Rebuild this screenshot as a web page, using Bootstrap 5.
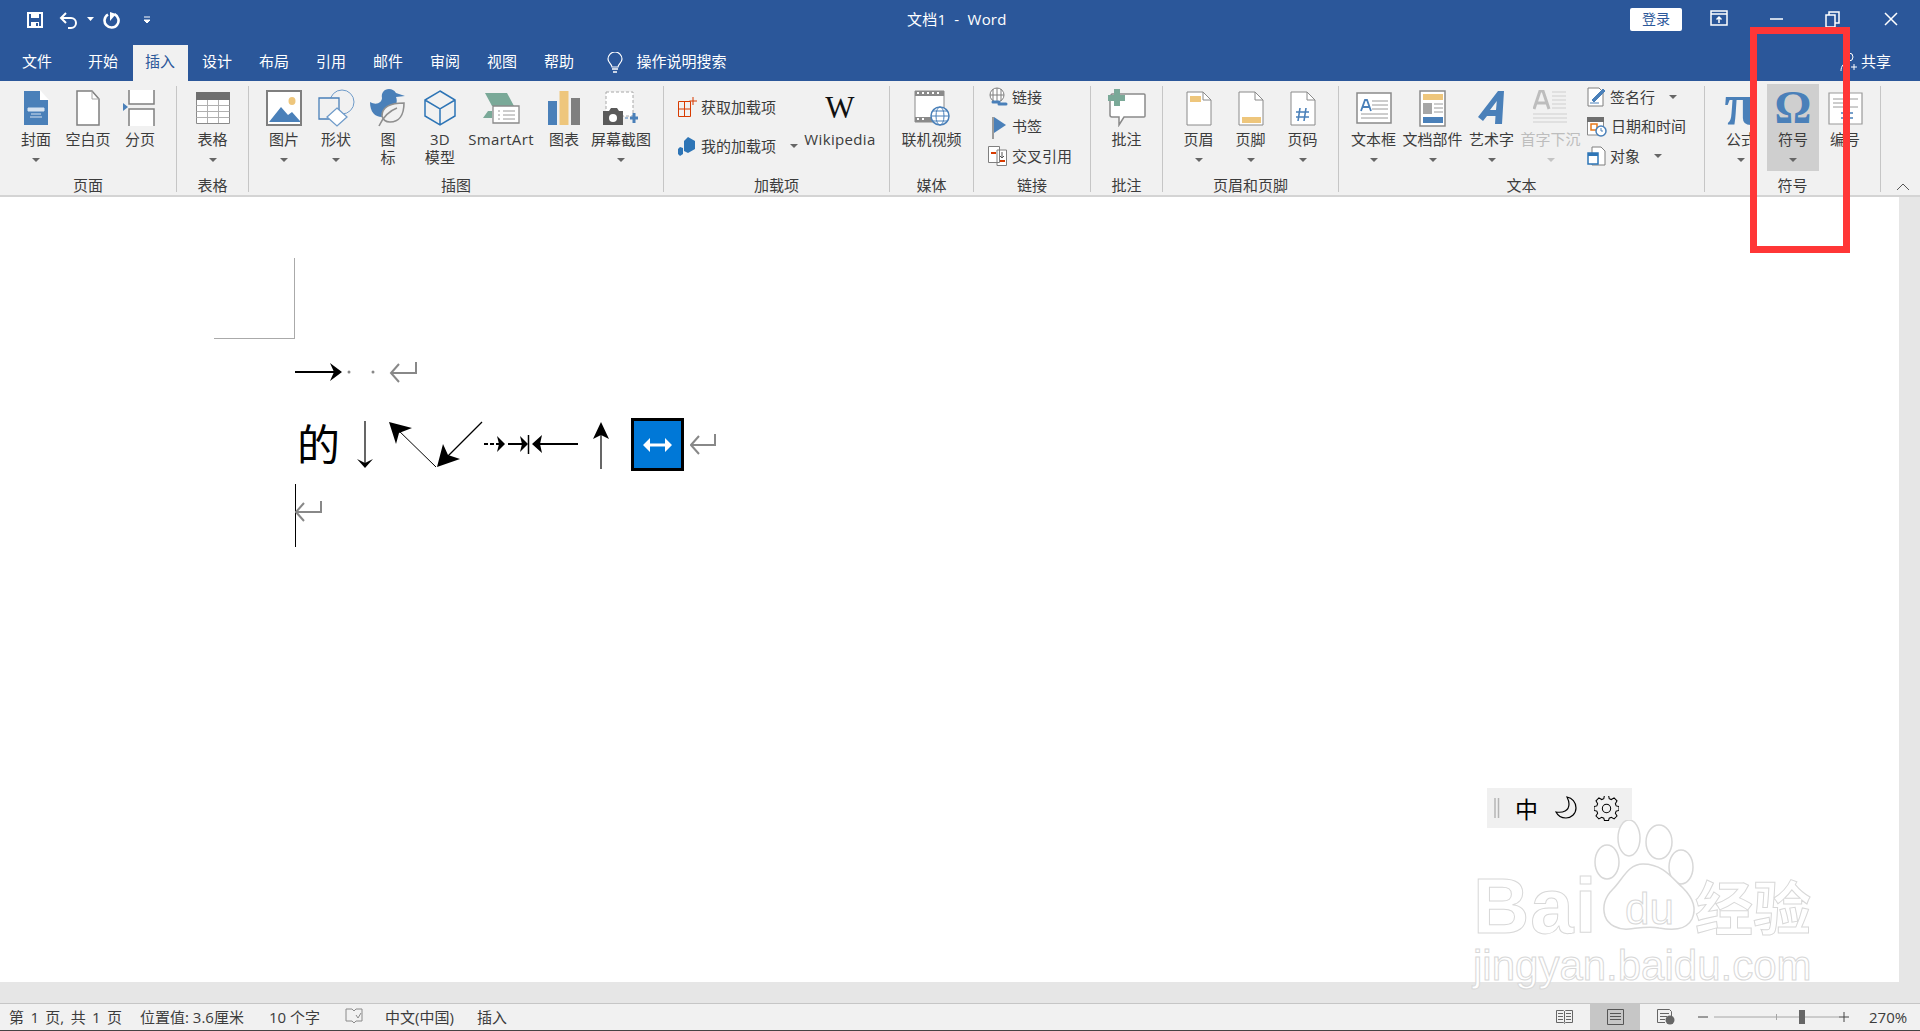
<!DOCTYPE html>
<html lang="zh-CN">
<head>
<meta charset="UTF-8">
<title>文档1 - Word</title>
<link href="https://cdn.jsdelivr.net/npm/bootstrap@5.3.3/dist/css/bootstrap.min.css" rel="stylesheet">
<style>
html, body { height: 100%; overflow: hidden; }
body { font-family: "Open Sans", "Noto Sans CJK SC", sans-serif; font-size: 15px; color: #3c3c3c; background: #fff; position: relative; }
svg { display: block; }
.app { height: 1031px; }
.titlebar { height: 45px; background: #2b579a; color: #fff; position: relative; }
.qat { padding-left: 27px; margin-bottom: 6px; }
.qat-more { margin-left: 23px; }
.doc-title { position: absolute; left: 907px; top: 8px; line-height: 22px; white-space: nowrap; letter-spacing: .2px; }
.signin { position: absolute; left: 1630px; top: 8px; width: 52px; height: 23px; background: #fff; color: #2b579a; border-radius: 2px; text-align: center; line-height: 22px; font-size: 14px; }
.winbtn { position: absolute; top: 10px; }
.w-a { left: 1710px; } .w-b { left: 1768px; } .w-c { left: 1825px; } .w-d { left: 1882px; }
.tabs { height: 36px; background: #2b579a; color: #fff; padding-left: 9.5px; position: relative; }
.tab { width: 55px; margin-right: 2px; text-align: center; line-height: 33px; }
.tab.first { margin-right: 11px; }
.tab.active { background: #f1f1f1; color: #2b579a; }
.tell { margin-left: 18px; gap: 14px; }
.tell span { margin-top: -3px; }
.share { position: absolute; left: 1840px; top: 0; line-height: 33px; gap: 3px; }
.ribbon { height: 116px; background: #f1f1f1; border-bottom: 2px solid #d4d4d4; padding-top: 5px; position: relative; }
.grp { height: 106px; border-right: 1px solid #c6c6c6; flex: none; }
.grp-body { height: 92px; }
.grp-label { height: 14px; line-height: 14px; text-align: center; white-space: nowrap; }
.g1 { width: 177px; } .g1 .grp-body { padding-left: 10px; }
.g2 { width: 72px; }
.g3 { width: 415px; } .g3 .grp-body { padding-left: 9px; }
.g4 { width: 226px; } .g4 .grp-body { padding-left: 14px; }
.g5 { width: 84px; }
.g6 { width: 117px; } .g6 .grp-body { padding-left: 14px; }
.g7 { width: 72px; }
.g8 { width: 176px; }
.g9 { width: 366px; } .g9 .grp-body { padding-left: 5px; }
.g10 { width: 176px; } .g10 .grp-body { padding-left: 10px; }
.rb { width: 52px; height: 87px; margin-top: -2px; padding-top: 5px; flex: none; display: flex; flex-direction: column; align-items: center; white-space: nowrap; }
.rb .ic { height: 38px; display: flex; align-items: center; justify-content: center; margin-bottom: 3px; }
.rb .lb { line-height: 18px; text-align: center; }
.rb .cr, .sm .cr { width: 0; height: 0; border-left: 4px solid transparent; border-right: 4px solid transparent; border-top: 4px solid #666; }
.rb .cr { margin-top: 10px; }
.rb-59 { width: 59px; } .rb-70 { width: 70px; } .rb-56 { width: 56px; } .rb-58 { width: 58px; }
.lat { letter-spacing: .35px; }
.rb.on { background: #cfcfcf; }
.rb.off, .rb.off .lb { color: #bdbdbd; }
.rb.off .cr { border-top-color: #c4c4c4; }
.sm-col { width: 127px; padding-top: 10px; gap: 17px; }
.sm-col.tight { padding-top: 0; gap: 7.5px; width: auto; margin-top: 0; }
.sm { height: 22px; gap: 4px; white-space: nowrap; line-height: 21px; }
.sm .cr { margin-left: 10px; }
.wiki-w { font-family: "Liberation Serif", serif; font-weight: 400; font-size: 31px; color: #111; line-height: 38px; }
.side-col { margin-left: 7px; }
.pi { font-family: "Liberation Serif", serif; font-weight: 700; line-height: 38px; color: #4a80b9; }
.pi-a { font-size: 60px; margin-top: -8px; }
.pi-o { font-size: 46px; }
.collapse-btn { position: absolute; right: 10px; bottom: 4px; }
.work { height: 806px; }
.page { width: 1899px; height: 785px; background: #fff; padding: 61px 0 0 214px; flex: none; }
.crop { width: 81px; height: 81px; border-right: 1px solid #aaa; border-bottom: 1px solid #aaa; }
.line1 { margin: 22px 0 0 81px; }
.line2 { margin: 33px 0 0 85px; height: 53px; }
.zi { font-family: "Noto Sans CJK SC", sans-serif; font-size: 43px; line-height: 48px; color: #000; width: 48px; flex: none; margin-left: -2px; }
.symbol-box { width: 53px; height: 53px; background: #0078d7; border: 3px solid #000; flex: none; }
.line3 { margin: 13px 0 0 81px; }
.ret { margin: 15px 0 0 6px; }
.bar-strip { background: #e6e6e6; }
.status { height: 28px; background: #f1f1f1; border-top: 1px solid #c6c6c6; border-bottom: 1px solid #444; position: relative; font-size: 15px; line-height: 26px; padding-left: 9px; white-space: nowrap; }
.st1 { width: 131px; word-spacing: 2.500px; } .st2 { width: 129px; } .st3 { width: 76px; } .st4 { width: 40px; } .st5 { width: 92px; }
.st-right { position: absolute; left: 1556px; top: 0; height: 26px; }
.view-on { width: 50px; height: 26px; background: #c6c6c6; margin: 0 17px; }
.zoom-slider { margin-left: 23px; }
.pct { margin-left: 20px; }
.ime { position: absolute; left: 1487px; top: 788px; width: 145px; height: 40px; background: #f0f0f0; padding-left: 7px; gap: 16px; color: #000; }
.ime-zi { font-size: 23px; line-height: 40px; font-family: "Noto Sans CJK SC", sans-serif; margin-left: -1px; }
.red-box { position: absolute; left: 1750px; top: 27px; width: 100px; height: 226px; border: 7px solid #ff3636; pointer-events: none; }
.wm { position: absolute; left: 1473px; top: 820px; width: 350px; height: 175px; color: #fff; -webkit-text-stroke: 1px #d8d8d8; }
.wm div, .wm svg { position: absolute; white-space: nowrap; }
.wm-bai { left: 0; top: 56px; font: 700 78px/60px "Liberation Sans", sans-serif; letter-spacing: 1px; }
.wm-paw { left: 120px; top: 0; }
.wm-jy { left: 222px; top: 50px; font: 700 58px/70px "Noto Sans CJK SC", sans-serif; }
.wm-url { left: 0; top: 122px; font: 400 42px/48px "Liberation Sans", sans-serif; }
.wm-du { left: 152px; top: 64px; font: 400 44px/50px "Liberation Sans", sans-serif; }
</style>
</head>
<body>
<div class="app d-flex flex-column">

  <div class="titlebar d-flex align-items-center">
    <div class="qat d-flex align-items-center">
      <svg width="16" height="16" viewBox="0 0 16 16"><path d="M1 1h14v14H1z" fill="none" stroke="#fff" stroke-width="2"/><path d="M4 1h8v5H4zM4 10h8v5H4z" fill="#fff"/><path d="M9 11h2v3H9z" fill="#2b579a"/></svg>
      <svg class="ms-3" width="20" height="18" viewBox="0 0 20 18"><path d="M3 7h9a5 5 0 0 1 0 10H9" fill="none" stroke="#fff" stroke-width="2"/><path d="M7 2L2 7l5 5" fill="none" stroke="#fff" stroke-width="2"/></svg>
      <svg class="ms-2" width="7" height="5" viewBox="0 0 7 5"><path d="M0 0h7L3.500 4z" fill="#fff"/></svg>
      <svg class="ms-2" width="18" height="18" viewBox="0 0 18 18"><path d="M6 3.500a7 7 0 1 0 6.500-.3" fill="none" stroke="#fff" stroke-width="2.600"/><path d="M8 1v9l6-7z" fill="#fff"/></svg>
      <svg class="qat-more" width="8" height="8" viewBox="0 0 8 8"><path d="M1 1h6M1 4h6L4 7z" fill="#fff" stroke="#fff"/></svg>
    </div>
    <div class="doc-title">文档1&nbsp; - &nbsp;Word</div>
    <div class="signin">登录</div>
    <svg class="winbtn w-a" width="18" height="16" viewBox="0 0 18 16"><path d="M1 1h16v14H1zM1 4h16" fill="none" stroke="#fff" stroke-width="1.500"/><path d="M9 13V7M6.500 9.500L9 7l2.500 2.500" fill="none" stroke="#fff" stroke-width="1.500"/></svg>
    <svg class="winbtn w-b" width="16" height="16" viewBox="0 0 16 16"><path d="M2 9h13" stroke="#fff" stroke-width="1.500"/></svg>
    <svg class="winbtn w-c" width="16" height="18" viewBox="0 0 16 18"><path d="M1 5h9v12H1zM4 5V2h10v11h-4" fill="none" stroke="#fff" stroke-width="1.500"/></svg>
    <svg class="winbtn w-d" width="18" height="18" viewBox="0 0 18 18"><path d="M3 3l12 12M15 3L3 15" stroke="#fff" stroke-width="1.500"/></svg>
  </div>

  <div class="tabs d-flex">
    <div class="tab first">文件</div>
    <div class="tab">开始</div>
    <div class="tab active">插入</div>
    <div class="tab">设计</div>
    <div class="tab">布局</div>
    <div class="tab">引用</div>
    <div class="tab">邮件</div>
    <div class="tab">审阅</div>
    <div class="tab">视图</div>
    <div class="tab">帮助</div>
    <div class="tell d-flex align-items-center">
      <svg width="16" height="22" viewBox="0 0 16 22"><path d="M5 15c0-3-4-4-4-8a7 7 0 0 1 14 0c0 4-4 5-4 8z" fill="none" stroke="#fff" stroke-width="1.200"/><path d="M5 17h6M6 20h4" stroke="#fff" stroke-width="1.500"/></svg>
      <span>操作说明搜索</span>
    </div>
    <div class="share d-flex align-items-center">
      <svg width="18" height="20" viewBox="0 0 18 20"><circle cx="9" cy="5" r="4" fill="none" stroke="#fff"/><path d="M1 19c0-5 3-9 8-9M11 15h6M14 12v6" fill="none" stroke="#fff"/></svg>
      <span>共享</span>
    </div>
  </div>

  <div class="ribbon d-flex">

    <div class="grp g1">
      <div class="grp-body d-flex">
        <div class="rb"><div class="ic"><svg width="28" height="36" viewBox="0 0 28 36"><path d="M2 1h16l8 9v25H2z" fill="#4a80b9"/><path d="M18 0v10h9z" fill="#fff"/><path d="M6 18h16v3H6zM9 24h10M8 27h12" fill="#d5e2f0" stroke="#d5e2f0"/></svg></div><div class="lb">封面</div><div class="cr"></div></div>
        <div class="rb"><div class="ic"><svg width="28" height="36" viewBox="0 0 28 36"><path d="M3 1h15l7 8v26H3z" fill="#fff" stroke="#7f7f7f" stroke-width="1.500"/><path d="M18 1v8h7" fill="none" stroke="#a6a6a6"/></svg></div><div class="lb">空白页</div></div>
        <div class="rb"><div class="ic"><svg width="37" height="36" viewBox="0 0 37 36"><path d="M7 0v14h25V0" fill="#fff" stroke="#7f7f7f" stroke-width="1.500"/><path d="M7 36V19h25v17z" fill="#fff"/><path d="M7 36V19h25v17" fill="none" stroke="#7f7f7f" stroke-width="1.500"/><path d="M1 13l5 4-5 4z" fill="#4a80b9"/></svg></div><div class="lb">分页</div></div>
      </div>
      <div class="grp-label">页面</div>
    </div>

    <div class="grp g2">
      <div class="grp-body d-flex justify-content-center">
        <div class="rb"><div class="ic"><svg width="34" height="32" viewBox="0 0 34 32"><path d="M.5 7.500h33v24H.500z" fill="#fff" stroke="#8a8a8a"/><path d="M0 0h34v8H0z" fill="#6e6e6e"/><path d="M.5 13.500h33M.5 19.500h33M.5 25.500h33M11.500 8v23M22.500 8v23" stroke="#b0b0b0" fill="none"/></svg></div><div class="lb">表格</div><div class="cr"></div></div>
      </div>
      <div class="grp-label">表格</div>
    </div>

    <div class="grp g3">
      <div class="grp-body d-flex">
        <div class="rb"><div class="ic"><svg width="36" height="36" viewBox="0 0 36 36"><path d="M1 1h34v34H1z" fill="#fff" stroke="#7f7f7f" stroke-width="2"/><path d="M3 32l12-15 7 8 4-3 8 9v1H3z" fill="#4a80b9"/><ellipse cx="26" cy="11" rx="3.500" ry="4" fill="#eec67c"/></svg></div><div class="lb">图片</div><div class="cr"></div></div>
        <div class="rb"><div class="ic"><svg width="37" height="38" viewBox="0 0 37 38"><circle cx="24" cy="13" r="12" fill="none" stroke="#6f9bc9"/><path d="M1 9h20v21H1z" fill="#f1f1f1" stroke="#4a80b9" stroke-width="1.300"/><path d="M19 19l10 9-10 9-10-9z" fill="#fff" stroke="#6f9bc9" stroke-width="1.300"/></svg></div><div class="lb">形状</div><div class="cr"></div></div>
        <div class="rb"><div class="ic"><svg width="36" height="38" viewBox="0 0 36 38"><path d="M0 13c0 10 5 15 12 15 6 0 13-5 14-12 1-3 1-6 0-8l9-1-9-3c-2-3-4-4-7-4-5 0-8 4-7 9 0 4-5 8-12 4z" fill="#4a80b9"/><path d="M12 27c0-9 8-13 22-13 0 12-5 19-14 19-4 0-7-2-8-6z" fill="#f1f1f1" stroke="#8f8f8f" stroke-width="1.600"/><path d="M9 37c4-9 10-15 18-18" fill="none" stroke="#8f8f8f" stroke-width="1.600"/></svg></div><div class="lb">图<br>标</div></div>
        <div class="rb"><div class="ic"><svg width="32" height="36" viewBox="0 0 32 36"><path d="M16 1l15 9v16l-15 9-15-9V10zM1 10l15 9 15-9M16 19v16" fill="none" stroke="#2e75b6" stroke-width="1.500"/></svg></div><div class="lb lat">3D<br>模型</div></div>
        <div class="rb rb-70"><div class="ic"><svg width="37" height="31" viewBox="0 0 37 31"><path d="M0 0h24l7 13H9L2 0zM0 25l5-7h4v7z" fill="#7aa998"/><path d="M10 13h26v17H10z" fill="#fff" stroke="#8a8a8a" stroke-width="1.300"/><path d="M15 18h2M20 18h12M15 22h2M20 22h12M15 26h2M20 26h12" stroke="#9a9a9a"/></svg></div><div class="lb lat">SmartArt</div></div>
        <div class="rb rb-56"><div class="ic"><svg width="32" height="34" viewBox="0 0 32 34"><path d="M0 10h9v24H0z" fill="#4a80b9"/><path d="M11.500 0h9v34h-9z" fill="#eec67c"/><path d="M23 7h9v27h-9z" fill="#7f7f7f"/></svg></div><div class="lb">图表</div></div>
        <div class="rb rb-58"><div class="ic"><svg width="36" height="34" viewBox="0 0 36 34"><path d="M3 1h27v24H3z" fill="#fff" stroke="#a8a8a8" stroke-dasharray="3 2"/><path d="M0 20h6l2-3h6l2 3h4v14H0z" fill="#5a5a5a"/><circle cx="10" cy="27" r="4" fill="#fff"/><path d="M27 27h8M31 22v10" stroke="#4a80b9" stroke-width="3"/><path d="M22 27h3" stroke="#4a80b9"/></svg></div><div class="lb">屏幕截图</div><div class="cr"></div></div>
      </div>
      <div class="grp-label">插图</div>
    </div>

    <div class="grp g4">
      <div class="grp-body d-flex">
        <div class="sm-col d-flex flex-column">
          <div class="sm d-flex align-items-center"><svg width="19" height="20" viewBox="0 0 19 20"><path d="M.5 4.500h12v15H.500zM.5 12h12M6.500 4.500v15" fill="none" stroke="#d83b01"/><path d="M15 0v8M11.500 4h7.500" stroke="#d83b01"/></svg><span>获取加载项</span></div>
          <div class="sm d-flex align-items-center"><svg width="19" height="19" viewBox="0 0 19 19"><path d="M10 0l7 4v8l-7 4-4-2V4zM2 10l3 1v6l-3 2-2-2v-5z" fill="#2e75b6"/></svg><span>我的加载项</span><i class="cr"></i></div>
        </div>
        <div class="rb rb-70"><div class="ic"><span class="wiki-w">W</span></div><div class="lb lat">Wikipedia</div></div>
      </div>
      <div class="grp-label">加载项</div>
    </div>

    <div class="grp g5">
      <div class="grp-body d-flex justify-content-center">
        <div class="rb"><div class="ic"><svg width="36" height="36" viewBox="0 0 36 36"><path d="M1 1h29v31H1z" fill="#fff" stroke="#8a8a8a"/><path d="M1 1h29v5H1zM1 27h29v5H1z" fill="#8a8a8a"/><path d="M3 3h2M8 3h2M13 3h2M18 3h2M23 3h2M3 29h2M8 29h2" stroke="#fff" stroke-width="2"/><circle cx="26" cy="26" r="9" fill="#fff" stroke="#4a80b9" stroke-width="1.500"/><ellipse cx="26" cy="26" rx="4" ry="9" fill="none" stroke="#4a80b9"/><path d="M17 26h18M18.500 21h15M18.500 31h15" stroke="#4a80b9"/></svg></div><div class="lb">联机视频</div></div>
      </div>
      <div class="grp-label">媒体</div>
    </div>

    <div class="grp g6">
      <div class="grp-body">
        <div class="sm-col tight d-flex flex-column">
          <div class="sm d-flex align-items-center"><svg width="20" height="20" viewBox="0 0 20 20"><circle cx="9" cy="8" r="7" fill="#fff" stroke="#7f7f7f"/><path d="M2 8h14M9 1v14M5 2v12M13 2v12" stroke="#7f7f7f" fill="none"/><path d="M5 15h6M11 17h7" stroke="#4a80b9" stroke-width="3" stroke-linecap="round"/></svg><span>链接</span></div>
          <div class="sm d-flex align-items-center"><svg width="20" height="24" viewBox="0 0 20 24"><path d="M5 2v22" stroke="#7f7f7f" stroke-width="1.500"/><path d="M6 2l12 8-12 8z" fill="#4a80b9"/></svg><span>书签</span></div>
          <div class="sm d-flex align-items-center"><svg width="20" height="20" viewBox="0 0 20 20"><path d="M.5.500h11v16H.500zM9 4h9.500v15.500H9z" fill="#fff" stroke="#7f7f7f"/><path d="M3 7h5" stroke="#d83b01" stroke-width="2"/><path d="M12 15h5" stroke="#d83b01" stroke-width="2"/><path d="M14 6v6M12 10l2 2 2-2" fill="none" stroke="#555"/></svg><span>交叉引用</span></div>
        </div>
      </div>
      <div class="grp-label">链接</div>
    </div>

    <div class="grp g7">
      <div class="grp-body d-flex justify-content-center">
        <div class="rb"><div class="ic"><svg width="38" height="38" viewBox="0 0 38 38"><path d="M4 5h32a1 1 0 0 1 1 1v21a1 1 0 0 1-1 1H16l-5 8v-8H4a2 2 0 0 1-2-2V7z" fill="#fff" stroke="#8a8a8a" stroke-width="1.500"/><path d="M0 6h17v6H0zM6 0h6v17H6z" fill="#7aa998"/></svg></div><div class="lb">批注</div></div>
      </div>
      <div class="grp-label">批注</div>
    </div>

    <div class="grp g8">
      <div class="grp-body d-flex justify-content-center">
        <div class="rb"><div class="ic"><svg width="26" height="35" viewBox="0 0 26 35"><path d="M1 1h16l8 8v25H1z" fill="#fff" stroke="#8a8a8a"/><path d="M17 1v8h8" fill="none" stroke="#8a8a8a"/><path d="M4 5h11v6H4z" fill="#eec67c"/></svg></div><div class="lb">页眉</div><div class="cr"></div></div>
        <div class="rb"><div class="ic"><svg width="26" height="35" viewBox="0 0 26 35"><path d="M1 1h16l8 8v25H1z" fill="#fff" stroke="#8a8a8a"/><path d="M17 1v8h8" fill="none" stroke="#8a8a8a"/><path d="M4 26h19v6H4z" fill="#eec67c"/></svg></div><div class="lb">页脚</div><div class="cr"></div></div>
        <div class="rb"><div class="ic"><svg width="26" height="35" viewBox="0 0 26 35"><path d="M1 1h16l8 8v25H1z" fill="#fff" stroke="#8a8a8a"/><path d="M17 1v8h8" fill="none" stroke="#8a8a8a"/><path d="M10 17l-2 13M16 17l-2 13M6 21h13M6 26h13" fill="none" stroke="#4a80b9" stroke-width="1.600"/></svg></div><div class="lb">页码</div><div class="cr"></div></div>
      </div>
      <div class="grp-label">页眉和页脚</div>
    </div>

    <div class="grp g9">
      <div class="grp-body d-flex">
        <div class="rb rb-59"><div class="ic"><svg width="36" height="32" viewBox="0 0 36 32"><path d="M1 1h34v30H1z" fill="#fff" stroke="#8a8a8a" stroke-width="1.500"/><path d="M16 9h16M16 13h16M16 17h16M5 22h27M5 26h27" stroke="#9a9a9a"/><path d="M5 19l4-11h2l4 11M7 15h6" fill="none" stroke="#4a80b9" stroke-width="1.800"/></svg></div><div class="lb">文本框</div><div class="cr"></div></div>
        <div class="rb rb-59"><div class="ic"><svg width="27" height="37" viewBox="0 0 27 37"><path d="M1 1h25v35H1z" fill="#fff" stroke="#8a8a8a" stroke-width="1.500"/><path d="M4 4h20v6H4z" fill="#eec67c"/><path d="M4 13h9v11H4z" fill="#a6a6a6"/><path d="M4 27h20v6H4z" fill="#4a80b9"/><path d="M15 14h9M15 18h9M15 22h9" stroke="#9a9a9a"/></svg></div><div class="lb">文档部件</div><div class="cr"></div></div>
        <div class="rb rb-59"><div class="ic"><svg width="28" height="36" viewBox="0 0 28 36"><path d="M0 27L20 1h6l-2 33h-7l.5-8H9l-4 5zM12 20h6l.8-9z" fill="#4a80b9"/></svg></div><div class="lb">艺术字</div><div class="cr"></div></div>
        <div class="rb rb-59 off"><div class="ic"><svg width="35" height="36" viewBox="0 0 35 36"><path d="M1 19L7 1h3l6 18M4 13h9" fill="none" stroke="#bdbdbd" stroke-width="3"/><path d="M19 2h14M19 6h14M19 10h14M19 14h14M19 18h14M0 24h34M0 28h34M0 32h34" stroke="#cfcfcf"/></svg></div><div class="lb">首字下沉</div><div class="cr"></div></div>
        <div class="sm-col tight side-col d-flex flex-column">
          <div class="sm d-flex align-items-center"><svg width="19" height="20" viewBox="0 0 19 20"><path d="M1 1h11l4 4v14H1z" fill="#fff" stroke="#7f7f7f"/><path d="M3 16h9M5 13L16 2l2 2L7 15z" fill="#4a80b9" stroke="#4a80b9"/></svg><span>签名行</span><i class="cr"></i></div>
          <div class="sm d-flex align-items-center"><svg width="20" height="20" viewBox="0 0 20 20"><path d="M.5 4h16v14H.500z" fill="#fff" stroke="#8a8a8a"/><path d="M0 0h17v5H0z" fill="#6e6e6e"/><path d="M4 7h6v6H4z" fill="#fff" stroke="#e8791b" stroke-width="1.500"/><circle cx="14" cy="14" r="5" fill="#fff" stroke="#4a80b9" stroke-width="1.500"/><path d="M14 11v3h2" fill="none" stroke="#4a80b9"/></svg><span>日期和时间</span></div>
          <div class="sm d-flex align-items-center"><svg width="19" height="20" viewBox="0 0 19 20"><path d="M5 1h9l4 4v14H5z" fill="#fff" stroke="#7f7f7f"/><path d="M1 7h10v11H1z" fill="#fff" stroke="#2e75b6" stroke-width="1.500"/><path d="M1 7h10v3H1z" fill="#2e75b6"/></svg><span>对象</span><i class="cr"></i></div>
        </div>
      </div>
      <div class="grp-label">文本</div>
    </div>

    <div class="grp g10">
      <div class="grp-body d-flex">
        <div class="rb"><div class="ic"><span class="pi pi-a">π</span></div><div class="lb">公式</div><div class="cr"></div></div>
        <div class="rb on"><div class="ic"><span class="pi pi-o">Ω</span></div><div class="lb">符号</div><div class="cr"></div></div>
        <div class="rb"><div class="ic"><svg width="35" height="33" viewBox="0 0 35 33"><path d="M1 1h33v31H1z" fill="#fff" stroke="#9a9a9a" stroke-width="1.200"/><path d="M5 7h25M5 11h10M5 15h10M20 15h10" stroke="#9a9a9a"/><path d="M17 17v12M21 17v12M13 21h12M13 26h12" stroke="#4a80b9" stroke-width="1.300"/></svg></div><div class="lb">编号</div></div>
      </div>
      <div class="grp-label">符号</div>
    </div>

    <svg class="collapse-btn" width="14" height="8" viewBox="0 0 14 8"><path d="M1 7l6-6 6 6" fill="none" stroke="#555"/></svg>
  </div>

  <div class="work d-flex flex-column">
    <div class="d-flex">
      <div class="page">
        <div class="crop"></div>
        <div class="line1">
          <svg width="125" height="24" viewBox="0 0 125 24"><path d="M0 11h44" stroke="#000" stroke-width="1.800"/><path d="M35 2l12 9-12 9 4-9z" fill="#000"/><circle cx="54" cy="11" r="1.500" fill="#888"/><circle cx="78" cy="11" r="1.500" fill="#888"/><path d="M121 1v11H97M104 3l-8 9 8 9" fill="none" stroke="#888" stroke-width="2"/></svg>
        </div>
        <div class="line2 d-flex">
          <span class="zi">的</span>
          <svg width="286" height="53" viewBox="0 0 286 53" class="flex-shrink-0">
            <path d="M20 3v45" stroke="#000" stroke-width="1.200"/><path d="M12 41l8 4 8-4-8 9z" fill="#000"/>
            <path d="M91 49L50 9" stroke="#000"/><path d="M44 4l23 6-13 5-3 11z" fill="#000"/>
            <path d="M137 4L100 41" stroke="#000" stroke-width="1.200"/><path d="M92 49l23-8-12-4-5-11z" fill="#000"/>
            <path d="M139 26h16" stroke="#000" stroke-width="2" stroke-dasharray="4 2"/><path d="M152 18l8 8-8 8 2-8z" fill="#000"/>
            <path d="M163 26h16" stroke="#000" stroke-width="2"/><path d="M175 18l8 8-8 8 2-8z" fill="#000"/><path d="M183.500 17v19" stroke="#000" stroke-width="1.500"/>
            <path d="M233 26h-40" stroke="#000" stroke-width="2"/><path d="M197 17l-10 9 10 9-2-9z" fill="#000"/>
            <path d="M256 6v45" stroke="#000" stroke-width="1.200"/><path d="M256 4l8 17-8-4-8 4z" fill="#000"/>
          </svg>
          <div class="symbol-box d-flex align-items-center justify-content-center">
            <svg width="31" height="16" viewBox="0 0 31 16"><path d="M4 8h23" stroke="#fff" stroke-width="3"/><path d="M8 1L1 8l7 7zM23 1l7 7-7 7z" fill="#fff"/></svg>
          </div>
          <svg class="ret" width="26" height="24" viewBox="0 0 26 24"><path d="M25 1v11H2M9 3l-8 9 8 9" fill="none" stroke="#888" stroke-width="2"/></svg>
        </div>
        <div class="line3 d-flex">
          <svg width="28" height="63" viewBox="0 0 28 63"><path d="M.5 0v63" stroke="#000"/><path d="M26 17v11H2M9 19l-8 9 8 9" fill="none" stroke="#888" stroke-width="2"/></svg>
        </div>
      </div>
      <div class="bar-strip flex-grow-1"></div>
    </div>
    <div class="bar-strip flex-grow-1"></div>
  </div>

  <div class="status d-flex">
    <span class="st1">第 1 页, 共 1 页</span>
    <span class="st2">位置值: 3.6厘米</span>
    <span class="st3">10 个字</span>
    <span class="st4"><svg class="mt-1" width="18" height="16" viewBox="0 0 18 16"><path d="M1 1h6l2 2 2-2h6v12H11l-2 2-2-2H1z" fill="none" stroke="#8a8a8a"/><path d="M11 7l2 3 3-5" fill="none" stroke="#8a8a8a"/></svg></span>
    <span class="st5">中文(中国)</span>
    <span>插入</span>
    <div class="st-right d-flex align-items-center">
      <svg width="17" height="14" viewBox="0 0 17 14"><path d="M.5.500h7l1 1 1-1h7v12h-7l-1 1-1-1h-7zM8.500 1.500v11M2 3.500h5M2 6.500h5M2 9.500h5M10 3.500h5M10 6.500h5M10 9.500h5" fill="none" stroke="#666"/></svg>
      <div class="view-on d-flex align-items-center justify-content-center"><svg width="17" height="16" viewBox="0 0 17 16"><path d="M.5.500h16v15H.500zM3 4.500h11M3 7.500h11M3 10.500h11" fill="none" stroke="#555"/></svg></div>
      <svg width="18" height="16" viewBox="0 0 18 16"><path d="M.5.500h12l2 2V7M.5.500v13H8M3 4.500h9M3 7.500h7M3 10.500h5" fill="none" stroke="#666"/><circle cx="13" cy="11" r="4.500" fill="#666"/></svg>
      <svg class="zoom-slider" width="151" height="16" viewBox="0 0 151 16"><path d="M0 8h10" stroke="#444"/><path d="M16 8h125M78.500 5v6" stroke="#a6a6a6"/><path d="M101 1h6v14h-6z" fill="#666"/><path d="M141 8h10M146 3v10" stroke="#444"/></svg>
      <span class="pct">270%</span>
    </div>
  </div>
</div>

<div class="ime d-flex align-items-center">
  <svg width="6" height="20" viewBox="0 0 6 20"><path d="M1 0v20M4.500 0v20" stroke="#b5b5b5" stroke-width="1.500"/></svg>
  <span class="ime-zi">中</span>
  <svg width="24" height="24" viewBox="0 0 24 24"><path d="M13 1c5 1 9 5 9 11 0 6-5 10-10 10-4 0-8-2-10-6 7 1 13-1 13-8 0-3-1-5-2-7z" fill="none" stroke="#000" stroke-width="1.200"/></svg>
  <svg width="25" height="25" viewBox="0 0 24 24"><path d="M10 1h4l.6 3 2 .9 2.700-1.600 2.800 2.800L20.500 9l.8 2 2.700.6v3.800l-2.700.6-.8 2 1.600 2.700-2.800 2.800-2.700-1.600-2 .9-.6 2.200h-4l-.6-2.200-2-.9-2.700 1.600-2.800-2.800L3.500 18l-.8-2L0 15.400v-3.800L2.700 11l.8-2-1.600-2.900 2.800-2.800 2.700 1.600 2-.9z" transform="translate(0 -1.500)" fill="none" stroke="#000"/><circle cx="12" cy="12" r="4" fill="none" stroke="#000"/></svg>
</div>

<div class="wm">
  <div class="wm-bai">Bai</div>
  <svg class="wm-paw" width="110" height="112" viewBox="0 0 110 112"><g fill="#fff" stroke="#d8d8d8" stroke-width="1.500"><ellipse cx="36" cy="18" rx="11" ry="18"/><ellipse cx="66" cy="22" rx="13" ry="17"/><ellipse cx="14" cy="42" rx="12" ry="17"/><ellipse cx="88" cy="47" rx="12" ry="17"/><path d="M50 44c-15 0-20 15-30 25-8 8-11 17-8 27 3 9 13 14 24 13 10-1 20-3 30-1 12 2 27 3 33-9 5-11 1-21-9-31-11-10-20-24-40-24z"/></g></svg>
  <div class="wm-du">du</div>
  <div class="wm-jy">经验</div>
  <div class="wm-url">jingyan.baidu.com</div>
</div>

<div class="red-box"></div>
</body>
</html>
